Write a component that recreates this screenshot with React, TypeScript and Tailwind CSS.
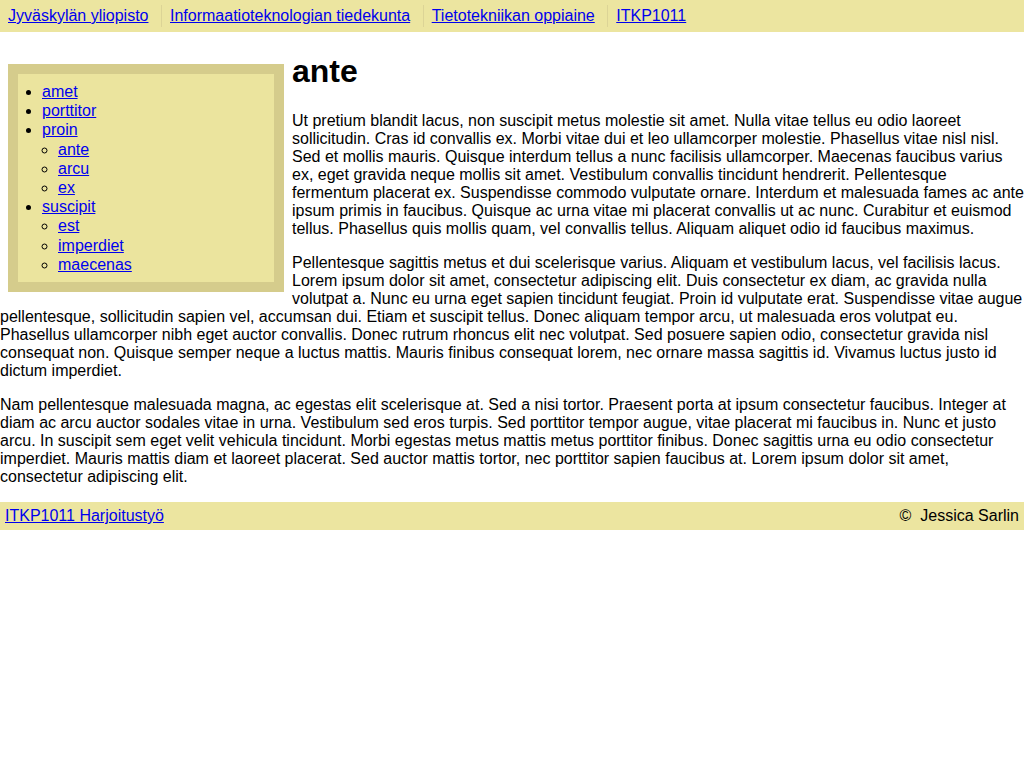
import React from "react";

const link = "text-[#0000ee] underline";

export default function App() {
  const navItems = [
    "Jyväskylän yliopisto",
    "Informaatioteknologian tiedekunta",
    "Tietotekniikan oppiaine",
    "ITKP1011",
  ];
  return (
    <div className="bg-white text-black text-[16px] leading-[normal] font-['Liberation_Sans',Arial,sans-serif] min-h-[768px]">
      <nav className="bg-[#ece5a0] px-2 py-[5px]">
        <ul className="flex m-0 p-0 list-none">
          {navItems.map((t, i) => (
            <li
              key={t}
              className={
                i === 0
                  ? "py-[2px]"
                  : "py-[2px] ml-[12.5px] pl-2 border-l border-[#dcd496]"
              }
            >
              <a href="#" className={link}>
                {t}
              </a>
            </li>
          ))}
        </ul>
      </nav>
      <main className="flow-root">
        <aside className="float-left mt-8 ml-2 mr-2 w-[276px] border-[10px] border-[#d5cc8c] bg-[#ebe49e]">
          <ul className="m-0 py-2 pl-6 list-disc leading-[19.2px]">
            <li><a href="#" className={link}>amet</a></li>
            <li><a href="#" className={link}>porttitor</a></li>
            <li>
              <a href="#" className={link}>proin</a>
              <ul className="m-0 p-0 pl-4 list-[circle]">
                <li><a href="#" className={link}>ante</a></li>
                <li><a href="#" className={link}>arcu</a></li>
                <li><a href="#" className={link}>ex</a></li>
              </ul>
            </li>
            <li>
              <a href="#" className={link}>suscipit</a>
              <ul className="m-0 p-0 pl-4 list-[circle]">
                <li><a href="#" className={link}>est</a></li>
                <li><a href="#" className={link}>imperdiet</a></li>
                <li><a href="#" className={link}>maecenas</a></li>
              </ul>
            </li>
          </ul>
        </aside>
        <h1 className="text-[32px] font-bold my-[21.44px] leading-[normal]">ante</h1>
        <p className="my-4">
          Ut pretium blandit lacus, non suscipit metus molestie sit amet. Nulla vitae tellus eu odio laoreet sollicitudin. Cras id convallis ex. Morbi vitae dui et leo ullamcorper molestie. Phasellus vitae nisl nisl. Sed et mollis mauris. Quisque interdum tellus a nunc facilisis ullamcorper. Maecenas faucibus varius ex, eget gravida neque mollis sit amet. Vestibulum convallis tincidunt hendrerit. Pellentesque fermentum placerat ex. Suspendisse commodo vulputate ornare. Interdum et malesuada fames ac ante ipsum primis in faucibus. Quisque ac urna vitae mi placerat convallis ut ac nunc. Curabitur et euismod tellus. Phasellus quis mollis quam, vel convallis tellus. Aliquam aliquet odio id faucibus maximus.
        </p>
        <p className="my-4">
          Pellentesque sagittis metus et dui scelerisque varius. Aliquam et vestibulum lacus, vel facilisis lacus. Lorem ipsum dolor sit amet, consectetur adipiscing elit. Duis consectetur ex diam, ac gravida nulla volutpat a. Nunc eu urna eget sapien tincidunt feugiat. Proin id vulputate erat. Suspendisse vitae augue pellentesque, sollicitudin sapien vel, accumsan dui. Etiam et suscipit tellus. Donec aliquam tempor arcu, ut malesuada eros volutpat eu. Phasellus ullamcorper nibh eget auctor convallis. Donec rutrum rhoncus elit nec volutpat. Sed posuere sapien odio, consectetur gravida nisl consequat non. Quisque semper neque a luctus mattis. Mauris finibus consequat lorem, nec ornare massa sagittis id. Vivamus luctus justo id dictum imperdiet.
        </p>
        <p className="my-4">
          Nam pellentesque malesuada magna, ac egestas elit scelerisque at. Sed a nisi tortor. Praesent porta at ipsum consectetur faucibus. Integer at diam ac arcu auctor sodales vitae in urna. Vestibulum sed eros turpis. Sed porttitor tempor augue, vitae placerat mi faucibus in. Nunc et justo arcu. In suscipit sem eget velit vehicula tincidunt. Morbi egestas metus mattis metus porttitor finibus. Donec sagittis urna eu odio consectetur imperdiet. Mauris mattis diam et laoreet placerat. Sed auctor mattis tortor, nec porttitor sapien faucibus at. Lorem ipsum dolor sit amet, consectetur adipiscing elit.
        </p>
      </main>
      <footer className="clear-both flex justify-between bg-[#ece5a0] px-[5px] py-[5px]">
        <a href="#" className={link}>ITKP1011 Harjoitustyö</a>
        <span>©&nbsp; Jessica Sarlin</span>
      </footer>
    </div>
  );
}
